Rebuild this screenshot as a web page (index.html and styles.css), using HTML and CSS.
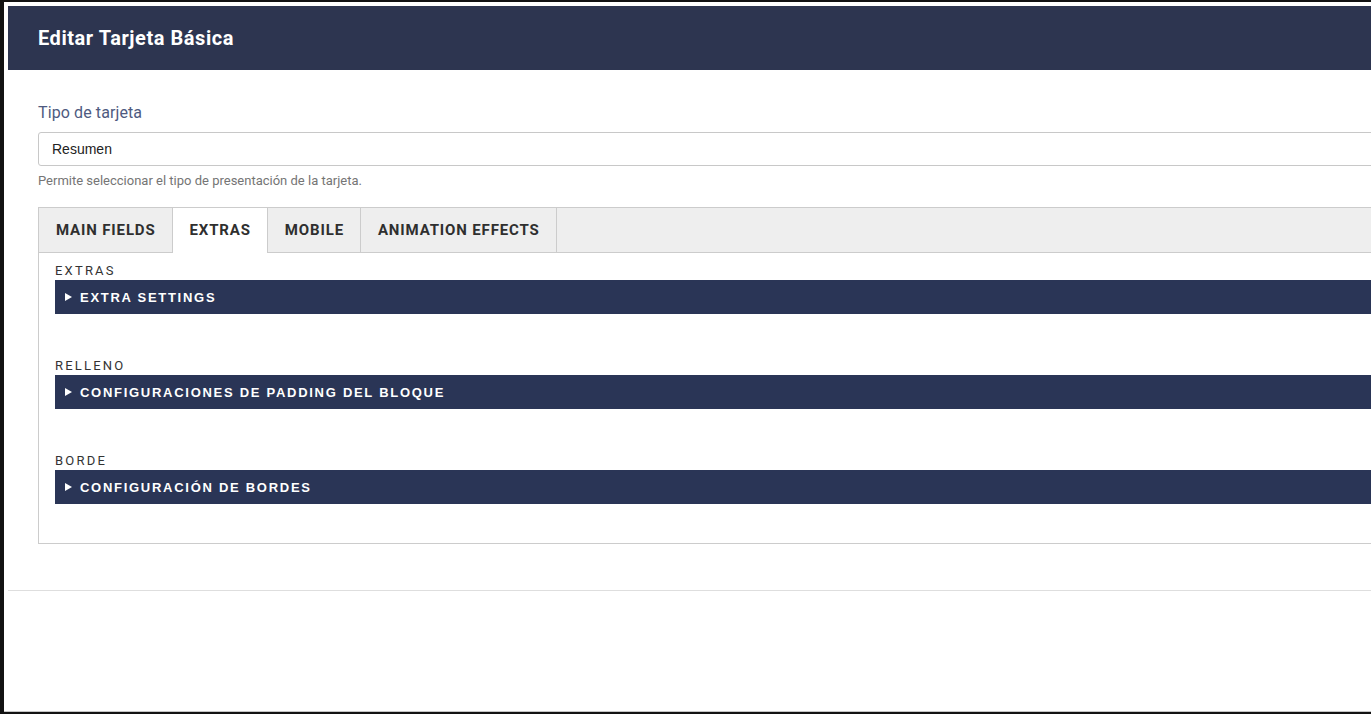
FILE: index.html
```html
<!DOCTYPE html>
<html lang="es">
<head>
<meta charset="utf-8">
<title>Editar Tarjeta Básica</title>
<link rel="stylesheet" href="styles.css">
</head>
<body>
<div class="frame">
  <div class="modal">
    <div class="modal-header">
      <h1 class="modal-title">Editar Tarjeta Básica</h1>
    </div>
    <div class="modal-body">
      <label class="field-label">Tipo de tarjeta</label>
      <div class="select">Resumen</div>
      <div class="help">Permite seleccionar el tipo de presentación de la tarjeta.</div>

      <div class="tabs">
        <div class="tab-list">
          <div class="tab">MAIN FIELDS</div>
          <div class="tab active">EXTRAS</div>
          <div class="tab">MOBILE</div>
          <div class="tab">ANIMATION EFFECTS</div>
        </div>
        <div class="tab-panel">
          <div class="section">
            <div class="section-label">EXTRAS</div>
            <div class="accordion"><span class="arrow"></span>EXTRA SETTINGS</div>
          </div>
          <div class="section">
            <div class="section-label">RELLENO</div>
            <div class="accordion"><span class="arrow"></span>CONFIGURACIONES DE PADDING DEL BLOQUE</div>
          </div>
          <div class="section last">
            <div class="section-label">BORDE</div>
            <div class="accordion"><span class="arrow"></span>CONFIGURACIÓN DE BORDES</div>
          </div>
        </div>
      </div>
    </div>
    <div class="modal-footer"></div>
  </div>
</div>
</body>
</html>
```

FILE: styles.css
```css
html, body {
  margin: 0;
  padding: 0;
  height: 714px;
  overflow: hidden;
}
body {
  background: #121212;
  font-family: Roboto, "Liberation Sans", Arial, sans-serif;
}
.frame {
  margin: 2px 0 0 4px;
  padding: 4px 0 0 4px;
  width: 1460px;
  background: #fff;
  border-bottom: 1px solid #c4c4c4;
}
.modal {
  background: #fff;
}
.modal-header {
  height: 64px;
  background: #2d3550;
  display: flex;
  align-items: center;
  padding-left: 30px;
}
.modal-title {
  margin: 0;
  color: #fff;
  font-size: 20px;
  font-weight: 700;
  letter-spacing: 0.55px;
}
.modal-body {
  padding: 33px 0 46px 30px;
  border-bottom: 1px solid #dedede;
}
.field-label {
  display: block;
  font-size: 16px;
  line-height: 20px;
  letter-spacing: 0.1px;
  color: #4e5a80;
  margin-bottom: 9px;
}
.select {
  height: 32px;
  border: 1px solid #c8c8c8;
  border-radius: 3px;
  padding-left: 13px;
  display: flex;
  align-items: center;
  font-family: "Liberation Sans", Arial, sans-serif;
  font-size: 14px;
  color: #222;
}
.help {
  margin-top: 7px;
  font-size: 13px;
  line-height: 16px;
  color: #757575;
}
.tabs {
  margin-top: 18px;
  border: 1px solid #cccccc;
  background: #fff;
}
.tab-list {
  display: flex;
  background: #eeeeee;
  border-bottom: 1px solid #cccccc;
  height: 44px;
}
.tab {
  display: flex;
  align-items: center;
  padding: 0 16px 0 17px;
  border-right: 1px solid #cccccc;
  font-size: 15px;
  font-weight: 700;
  letter-spacing: 0.85px;
  color: #2f2f2f;
}
.tab.active {
  background: #fff;
  height: 44px;
  padding-bottom: 1px;
}
.tab-panel {
  padding: 8px 0 39px 16px;
}
.section {
  margin-bottom: 42px;
}
.section.last {
  margin-bottom: 0;
}
.section-label {
  font-size: 13px;
  line-height: 19px;
  letter-spacing: 2.2px;
  color: #333;
}
.accordion {
  height: 34px;
  background: #2a3556;
  display: flex;
  align-items: center;
  padding-left: 10px;
  color: #fff;
  font-family: "Liberation Sans", Arial, sans-serif;
  font-size: 13px;
  font-weight: 700;
  letter-spacing: 1.72px;
}
.arrow {
  width: 0;
  height: 0;
  border-left: 7px solid #fff;
  border-top: 4.5px solid transparent;
  border-bottom: 4.5px solid transparent;
  margin-right: 8px;
}
.modal-footer {
  height: 120px;
}
```
